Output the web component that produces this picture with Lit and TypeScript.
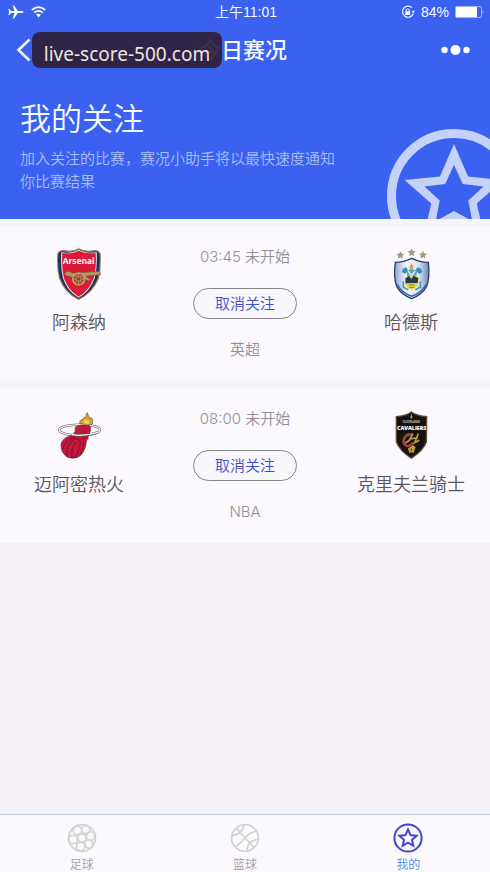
import { LitElement, html, svg, css } from "lit";
import { customElement, property } from "lit/decorators.js";

const starPoints = (cx: number, cy: number, outer: number, inner: number) =>
  Array.from({ length: 10 }, (_, i) => {
    const r = i % 2 ? inner : outer;
    const a = (Math.PI / 5) * i - Math.PI / 2;
    return `${(cx + r * Math.cos(a)).toFixed(1)},${(cy + r * Math.sin(a)).toFixed(1)}`;
  }).join(" ");

const arsenal = svg`
  <path d="M82 56 Q88 41 106 46 Q130 50 146 40 Q164 50 188 46 Q205 41 212 56 Q214 96 207 130 Q190 174 146 195 Q102 174 87 130 Q79 96 82 56Z" fill="#8b7a4c"/>
  <path d="M85 57 Q90 46 106 50 Q130 53 146 44 Q164 53 188 50 Q203 46 209 57 Q211 96 203 128 Q188 170 146 191 Q106 170 90 128 Q82 96 85 57Z" fill="#20305e"/>
  <path d="M94 52 Q126 56 146 44 Q166 56 200 52 Q202 100 194 130 Q180 170 146 188 Q112 170 99 130 Q91 98 94 52Z" fill="#f3e9ee"/>
  <path d="M97 54 Q128 57 146 47 Q166 57 197 54 Q200 100 191 130 Q177 168 146 185 Q116 168 102 130 Q94 98 97 54Z" fill="#dd1838"/>
  <text x="146" y="87" text-anchor="middle" font-size="25" font-weight="700" fill="#fff">Arsenal</text>
  <path d="M104 113 L116 108 L128 114 L210 109 L211 119 L168 124 L184 136 L174 138 L158 128 L126 127 L105 121Z" fill="#b09a62" stroke="#7c4634" stroke-width="2"/>
  <circle cx="146" cy="132" r="18" fill="#c03d42" stroke="#b7a265" stroke-width="5"/>
  <path d="M146 114V150M128 132H164M133 119L159 145M159 119L133 145" stroke="#b7a265" stroke-width="3"/>
  <circle cx="146" cy="132" r="5" fill="#765336"/>`;

const huddersfield = svg`
  <g fill="#a59a78" stroke="#6d6953" stroke-width="1">
    <polygon points=${starPoints(121, 61, 11, 5)}/>
    <polygon points=${starPoints(155, 53, 11, 5)}/>
    <polygon points=${starPoints(189, 60, 11, 5)}/>
  </g>
  <defs><linearGradient id="hud" x2="1"><stop stop-color="#8fa6ce"/><stop offset=".35" stop-color="#f2f6fc"/><stop offset=".7" stop-color="#dbe5f2"/><stop offset="1" stop-color="#7088b9"/></linearGradient></defs>
  <path d="M106 82 Q130 82 155 70 Q180 82 205 82 Q210 127 200 154 Q187 178 155 191 Q123 178 110 154 Q100 127 106 82Z" fill="url(#hud)" stroke="#243c78" stroke-width="4"/>
  <path d="M111 148Q125 173 155 184Q185 173 199 148" fill="none" stroke="#4263a6" stroke-width="5"/>
  <path d="M155 85l5 9-2 13h-7l-3-12Z" fill="#d7a550"/>
  <path d="M128 101l12-4 4 10-9 9-9-5ZM184 101l-12-4-6 10 12 10 8-5Z" fill="#378fb9"/>
  <path d="M139 109Q155 96 172 109L168 126H142Z" fill="#58a8c9"/>
  <path d="M145 108l9 13M165 108l-9 13" stroke="#e9f6fb" stroke-width="4"/>
  <path d="M134 127Q155 115 177 127L174 150Q165 162 155 164Q141 160 136 150Z" fill="#efd43d"/>
  <path d="M136 131l11-9 7 10 7-10 14 8-2 14-36 1Z" fill="#263a55"/>
  <path d="M130 139v18l15 7M181 139v18l-15 7" fill="none" stroke="#3e9dba" stroke-width="5"/>
  <path d="M146 150h18M148 157h14" stroke="#6d9150" stroke-width="3"/>`;

const heat = svg`
  <path d="M166 75Q160 59 174 58Q176 49 184 51Q181 42 187 38Q190 49 194 54Q203 51 202 62Q207 70 196 78Z" fill="#dca32c" stroke="#74532d" stroke-width="2"/>
  <path d="M177 71Q175 60 183 57Q186 66 191 60Q194 68 190 75Z" fill="#f4d04b"/>
  <ellipse cx="164" cy="90" rx="61" ry="16" fill="none" stroke="#57504f" stroke-width="7"/>
  <ellipse cx="164" cy="90" rx="61" ry="16" fill="none" stroke="#faf6fa" stroke-width="4"/>
  <path d="M151 81Q166 71 195 77Q200 91 190 107Q191 114 184 124Q182 151 166 167Q147 180 127 171Q107 159 108 132Q114 112 143 105Q153 98 151 81Z" fill="#c4183b" stroke="#651629" stroke-width="2"/>
  <path d="M113 147Q122 116 151 110M126 169Q120 134 151 115Q172 119 164 142Q158 163 147 174M141 173Q137 146 153 126M176 94Q184 102 174 113Q181 134 166 163" fill="none" stroke="#7b102e" stroke-width="3"/>
  <path d="M143 105Q178 110 216 98" fill="none" stroke="#57504f" stroke-width="7"/>
  <path d="M141 104Q178 110 218 97" fill="none" stroke="#fff" stroke-width="4"/>`;

const cavaliers = svg`
  <path d="M137 48Q168 47 184 34Q201 47 232 48L231 126Q222 153 184 177Q147 153 137 126Z" fill="#5b4b39"/>
  <path d="M141 51Q168 50 184 38Q201 50 228 51L227 125Q218 150 184 172Q150 150 141 125Z" fill="#17120f"/>
  <path d="M184 43v13M180 51h8" stroke="#aaa" stroke-width="3"/>
  <text x="184" y="69" text-anchor="middle" font-size="9" font-weight="700" fill="#c8c2bf">CLEVELAND</text>
  <text x="185" y="91" text-anchor="middle" font-size="16" font-weight="800" fill="#fff">CAVALIERS</text>
  <path d="M187 105Q173 98 163 114Q156 133 171 138Q183 139 190 127" fill="none" stroke="#9b443d" stroke-width="8"/>
  <path d="M189 101L180 117L204 113M205 101L194 128L208 121M166 129L181 119" fill="none" stroke="#c19c3e" stroke-width="5"/>
  <path d="M174 145L190 136L197 142L190 160L184 156L178 160Z" fill="#c19c3e"/>
  <path d="M184 145v8" stroke="#633325" stroke-width="3"/>`;

const football = svg`
  <g fill="none" stroke="#d3d3d0">
    <circle cx="15" cy="15" r="13.4" stroke-width="1.8"/>
    <g stroke-width="1.6">
      <circle cx="15" cy="15" r="4"/><circle cx="10.4" cy="7.4" r="4.2"/><circle cx="18.8" cy="6.6" r="4"/>
      <circle cx="23.6" cy="13" r="4.2"/><circle cx="21.8" cy="21" r="4"/><circle cx="13.6" cy="23.6" r="4.2"/><circle cx="6.2" cy="16.6" r="4.2"/>
    </g>
  </g>`;

const basketball = svg`
  <g fill="none" stroke="#d3d3d0" stroke-width="1.7">
    <circle cx="15" cy="15" r="13.4"/>
    <path d="M6.5 5Q11 11 15 15T24 24.5M26.500 8Q19 10 15 15T5 24M13.500 2Q14 10 2 13M17.500 28Q16 18 28 16.500"/>
  </g>`;

const mine = svg`
  <g fill="none" stroke="#4148c4" stroke-width="2">
    <circle cx="15" cy="15" r="13.6"/>
    <polygon points=${starPoints(15, 15.5, 9, 4.2)}/>
  </g>`;

interface Team { name: string; box: string; crest: unknown }
interface Match { time: string; league: string; home: Team; away: Team }

const matches: Match[] = [
  {
    time: "03:45 未开始", league: "英超",
    home: { name: "阿森纳", box: "39 33 216 168", crest: arsenal },
    away: { name: "哈德斯", box: "45 33 216 168", crest: huddersfield },
  },
  {
    time: "08:00 未开始", league: "NBA",
    home: { name: "迈阿密热火", box: "54 24 216 168", crest: heat },
    away: { name: "克里夫兰骑士", box: "75 24 216 168", crest: cavaliers },
  },
];

@customElement("match-card")
class MatchCard extends LitElement {
  @property({ attribute: false }) match!: Match;

  static styles = css`
    :host { display: block; border-top: 7px solid #f5f5f9; }
    .card { display: grid; grid-template-columns: 158px 1fr 158px; padding: 20px 0; background: #fbf8fe; }
    .team { display: flex; flex-direction: column; align-items: center; gap: 9px; }
    .crest { width: 72px; height: 56px; font-family: "Open Sans", sans-serif; }
    .name { font-size: 18px; line-height: 24px; color: #58565a; white-space: nowrap; }
    .info { display: flex; flex-direction: column; align-items: center; gap: 20px; font-size: 15px; line-height: 22px; color: #929095; }
    .unfollow { box-sizing: border-box; width: 104px; height: 31px; padding: 0; border: 1px solid #858488; border-radius: 16px;
      background: #f7f7fc; color: #3f4fcb; font: inherit; cursor: pointer; }
  `;

  team(t: Team) {
    return html`<div class="team">
      <svg class="crest" viewBox=${t.box} aria-hidden="true">${t.crest}</svg>
      <span class="name">${t.name}</span>
    </div>`;
  }

  render() {
    const m = this.match;
    return html`<article class="card">
      ${this.team(m.home)}
      <div class="info">
        <span>${m.time}</span>
        <button class="unfollow">取消关注</button>
        <span>${m.league}</span>
      </div>
      ${this.team(m.away)}
    </article>`;
  }
}

@customElement("app-root")
class AppRoot extends LitElement {
  static styles = css`
    :host { display: flex; flex-direction: column; min-height: 100vh; background: #f5f0f7;
      font-family: Inter, "Noto Sans CJK SC", sans-serif; font-weight: 350; }
    .top { position: relative; overflow: hidden; background: #3a61f0; color: #f4faff; }
    .status { display: grid; grid-template-columns: 1fr auto 1fr; align-items: center; height: 24px; padding: 0 6px 0 8px;
      font: 400 14px/20px "Liberation Sans", "Noto Sans CJK SC", sans-serif; }
    .signals { display: flex; align-items: center; gap: 7px; }
    .power { justify-content: flex-end; gap: 6px; }
    .nav { display: grid; grid-template-columns: 1fr auto 1fr; align-items: center; height: 52px; padding: 0 20px 0 16px; }
    .icon-button { display: flex; padding: 0; border: 0; background: none; color: inherit; cursor: pointer; }
    .more { justify-self: end; }
    .title { margin: 0; font-size: 22px; line-height: 32px; font-weight: 500; }
    .site { position: absolute; left: 32px; top: 32px; box-sizing: border-box; width: 190px; height: 36px; padding-top: 4px;
      border-radius: 8px; background: rgba(47, 31, 57, 0.92); color: #eee5dc; font: 400 19px/36px "Noto Sans", sans-serif; text-align: center; }
    .hero { padding: 20px 146px 26px 20px; }
    .heading { margin: 0 0 5px; font-size: 31px; line-height: 46px; font-weight: 350; }
    .lead { margin: 0; font-size: 15px; line-height: 23px; color: #a9bdf9; }
    .emblem { position: absolute; right: -31px; bottom: -44px; width: 134px; height: 134px; }
    .list { flex: 1; }
    .tabs { display: grid; grid-template-columns: repeat(3, 1fr); border-top: 1px solid #c3cfdf; background: #fbf8fe; }
    .tab { display: flex; flex-direction: column; align-items: center; gap: 5px; padding-top: 8px;
      font-size: 12px; line-height: 14px; color: #a3a1a6; text-decoration: none; }
    .active { color: #4a8ed8; }
  `;

  render() {
    return html`
      <header class="top">
        <div class="status">
          <div class="signals">
            <svg width="16" height="16" viewBox="0 0 16 16" fill="currentColor"><path d="M15.5 8Q15.5 7 13.8 7H10L6 1.5H4.6L6.5 7H3L1.5 5H.3L1.2 8 .3 11h1.2L3 9h3.5L4.6 14.5H6L10 9h3.8Q15.5 9 15.5 8Z"/></svg>
            <svg width="15" height="12" viewBox="0 0 15 12" fill="none" stroke="currentColor" stroke-width="1.7"><path d="M.8 4Q7.5-1.8 14.2 4M3.2 6.7Q7.5 3 11.8 6.7"/><path d="M5 8.6Q7.5 6.7 10 8.6L7.5 11.4Z" fill="currentColor" stroke="none"/></svg>
          </div>
          <span>上午11:01</span>
          <div class="signals power">
            <svg width="14" height="14" viewBox="0 0 14 14" fill="none" stroke="currentColor"><path d="M11 2.6A5.6 5.6 0 1 0 12.4 8.5" stroke-width="1.2"/><path d="M10.8 5.7h3.2l-1.6 2.6Z" fill="currentColor" stroke="none"/><rect x="4.2" y="6.2" width="5" height="3.8" fill="currentColor" stroke="none"/><path d="M5.3 6.5V5.2a1.4 1.4 0 0 1 2.8 0V6.5"/></svg>
            <span>84%</span>
            <svg width="29" height="12" viewBox="0 0 29 12"><rect x=".5" y=".5" width="26" height="11" rx="1.5" fill="none" stroke="#9db6fb"/><rect x="1" y="1" width="21" height="10" fill="#fff"/><path d="M27.5 4Q29 6 27.5 8Z" fill="#dbe6ff"/></svg>
          </div>
        </div>
        <nav class="nav">
          <button class="icon-button" aria-label="返回"><svg width="16" height="24" viewBox="0 0 16 24" fill="none" stroke="currentColor" stroke-width="2.6"><path d="M13.5 1.5L2.5 12L13.5 22.5"/></svg></button>
          <h1 class="title">今日赛况</h1>
          <button class="icon-button more" aria-label="更多"><svg width="29" height="12" viewBox="0 0 29 12" fill="#fff"><circle cx="3.5" cy="6" r="3.2"/><circle cx="14.5" cy="6" r="5"/><circle cx="25.5" cy="6" r="3.2"/></svg></button>
        </nav>
        <div class="site">live-score-500.com</div>
        <section class="hero">
          <h2 class="heading">我的关注</h2>
          <p class="lead">加入关注的比赛，赛况小助手将以最快速度通知你比赛结果</p>
        </section>
        <svg class="emblem" viewBox="0 0 134 134" aria-hidden="true">
          <circle cx="67" cy="67" r="62.5" fill="none" stroke="#c4d1f8" stroke-width="9"/>
          <path fill="#c4d1f8" fill-rule="evenodd" d="M${starPoints(67, 67, 52, 24)}ZM${starPoints(67, 67, 31, 15)}Z"/>
        </svg>
      </header>
      <main class="list">${matches.map((m) => html`<match-card .match=${m}></match-card>`)}</main>
      <nav class="tabs">
        <a class="tab" href="#football"><svg width="30" height="30" viewBox="0 0 30 30">${football}</svg>足球</a>
        <a class="tab" href="#basketball"><svg width="30" height="30" viewBox="0 0 30 30">${basketball}</svg>篮球</a>
        <a class="tab active" href="#mine"><svg width="30" height="30" viewBox="0 0 30 30">${mine}</svg>我的</a>
      </nav>`;
  }
}
